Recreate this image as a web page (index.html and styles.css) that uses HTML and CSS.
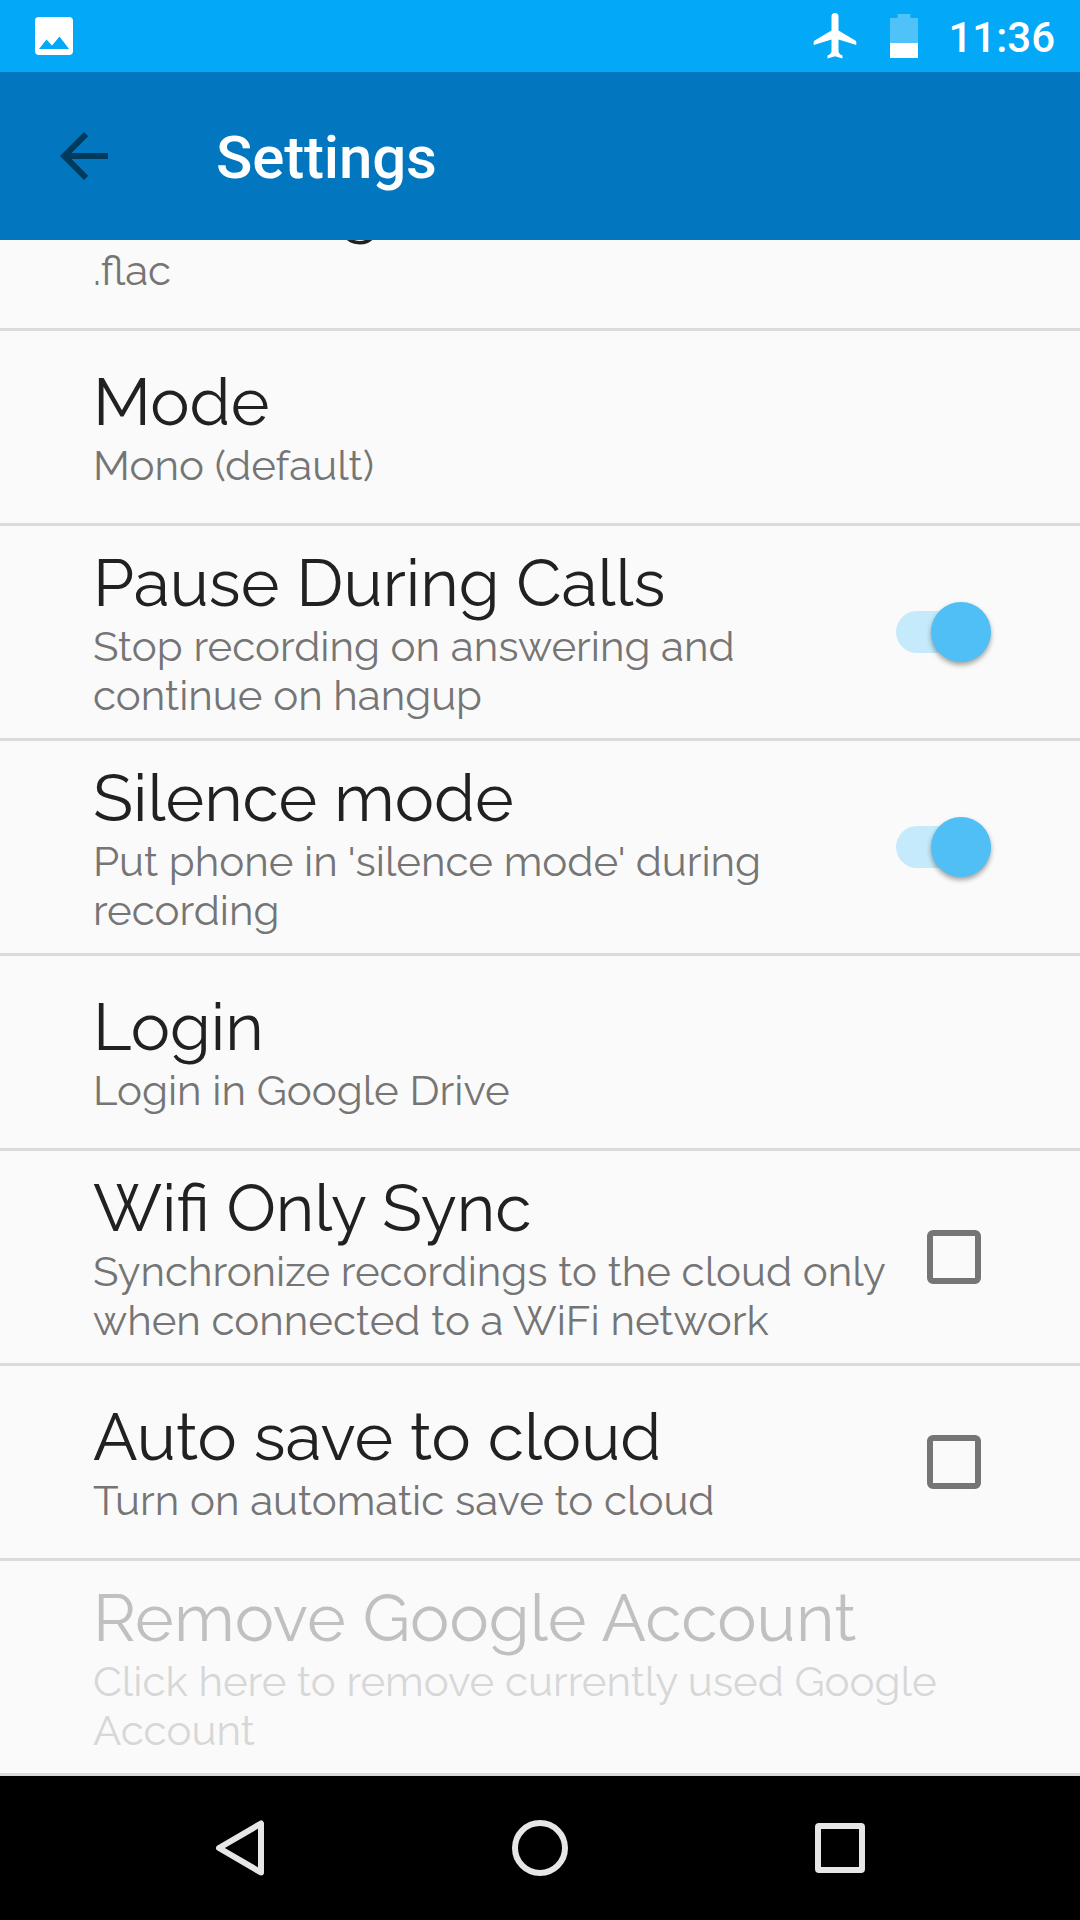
FILE: index.html
```html
<!DOCTYPE html>
<html lang="en">
<head>
  <meta charset="UTF-8">
  <meta name="viewport" content="width=device-width, initial-scale=1.0">
  <title>Settings</title>

  <link rel="stylesheet" href="styles.css">
</head>
<body>
  <div class="status-bar">
    <svg class="status-bar__picture" width="38" height="38" viewBox="0 0 38 38">
      <path fill="#fff" fill-rule="evenodd" d="M4 0h30a4 4 0 0 1 4 4v30a4 4 0 0 1-4 4H4a4 4 0 0 1-4-4V4a4 4 0 0 1 4-4zM4 32h30L24.500 19.500 17 28.500 11.500 22.500z"/>
    </svg>
    <svg class="status-bar__airplane" width="44" height="46" viewBox="0 0 44 46">
      <path fill="#fff" d="M18.500 3.500a3.500 3.500 0 0 1 7 0V17.500L42.300 27.500Q43.300 28.200 43.300 29.500V32L25.500 26.500V38Q25.700 41 29.500 42.500V45.500L22 43.200 14.500 45.500V42.500Q18.300 41 18.500 38V26.500L.7 32V29.500Q.7 28.200 1.700 27.500L18.500 17.500z"/>
    </svg>
    <svg class="status-bar__battery" width="28" height="44" viewBox="0 0 28 44">
      <path fill="#fff" fill-opacity=".3" d="M7.500 0h13v4H28v25H0V4h7.500z"/>
      <path fill="#fff" d="M0 29h28v15H0z"/>
    </svg>
    <span class="status-bar__time">11:36</span>
  </div>

  <header class="toolbar">
    <svg class="toolbar__back" width="72" height="72" viewBox="0 0 24 24">
      <path fill="#003a5c" d="M20 11H7.830l5.590-5.590L12 4l-8 8 8 8 1.410-1.410L7.830 13H20v-2z"/>
    </svg>
    <h1 class="toolbar__title">Settings</h1>
  </header>

  <main class="settings">
    <section class="setting">
      <div class="setting__text">
        <h2 class="setting__title">Encoding</h2>
        <p class="setting__summary">.flac</p>
      </div>
    </section>

    <section class="setting">
      <div class="setting__text">
        <h2 class="setting__title">Mode</h2>
        <p class="setting__summary">Mono (default)</p>
      </div>
    </section>

    <section class="setting setting--tall">
      <div class="setting__text">
        <h2 class="setting__title">Pause During Calls</h2>
        <p class="setting__summary">Stop recording on answering and<br>continue on hangup</p>
      </div>
      <div class="switch"><div class="switch__thumb"></div></div>
    </section>

    <section class="setting setting--tall">
      <div class="setting__text">
        <h2 class="setting__title">Silence mode</h2>
        <p class="setting__summary">Put phone in 'silence mode' during<br>recording</p>
      </div>
      <div class="switch"><div class="switch__thumb"></div></div>
    </section>

    <section class="setting">
      <div class="setting__text">
        <h2 class="setting__title">Login</h2>
        <p class="setting__summary">Login in Google Drive</p>
      </div>
    </section>

    <section class="setting setting--tall">
      <div class="setting__text">
        <h2 class="setting__title">Wifi Only Sync</h2>
        <p class="setting__summary">Synchronize recordings to the cloud only<br>when connected to a WiFi network</p>
      </div>
      <div class="checkbox"></div>
    </section>

    <section class="setting">
      <div class="setting__text">
        <h2 class="setting__title">Auto save to cloud</h2>
        <p class="setting__summary">Turn on automatic save to cloud</p>
      </div>
      <div class="checkbox"></div>
    </section>

    <section class="setting setting--tall setting--disabled">
      <div class="setting__text">
        <h2 class="setting__title">Remove Google Account</h2>
        <p class="setting__summary">Click here to remove currently used Google<br>Account</p>
      </div>
    </section>
  </main>

  <nav class="nav-bar">
    <svg width="60" height="60" viewBox="0 0 60 60">
      <path class="nav-bar__shape" d="M51 5.500V54.500L9 30z"/>
    </svg>
    <svg width="60" height="60" viewBox="0 0 60 60">
      <circle class="nav-bar__shape" cx="30" cy="30" r="25"/>
    </svg>
    <svg width="60" height="60" viewBox="0 0 60 60">
      <rect class="nav-bar__shape" x="8" y="8" width="44" height="44" rx="1"/>
    </svg>
  </nav>
</body>
</html>
```

FILE: styles.css
```css
* {
  box-sizing: border-box;
}

body {
  margin: 0;
  width: 1080px;
  height: 1920px;
  display: flex;
  flex-direction: column;
  overflow: hidden;
  background: #fafafa;
  font-family: Raleway, Lato, sans-serif;
}

h1, h2, p {
  margin: 0;
  font-weight: normal;
}

.status-bar {
  flex: none;
  height: 72px;
  padding: 0 25px 0 35px;
  display: flex;
  align-items: center;
  background: #03a9f7;
}

.status-bar__airplane {
  margin-left: auto;
}

.status-bar__battery {
  margin-left: 33px;
}

.status-bar__time {
  margin-left: 30px;
  padding-top: 2px;
  font: 500 42px/49px Roboto, sans-serif;
  color: #fff;
}

.toolbar {
  flex: none;
  height: 168px;
  padding-left: 48px;
  display: flex;
  align-items: center;
  background: #0277bf;
}

.toolbar__title {
  margin-left: 96px;
  padding-top: 4px;
  font: 500 60px/70px Roboto, sans-serif;
  letter-spacing: -0.15px;
  color: #fff;
}

/* The list is scrolled, so it is anchored to the bottom and cut off at the top */
.settings {
  flex: 1;
  min-height: 0;
  display: flex;
  flex-direction: column;
  justify-content: flex-end;
  overflow: hidden;
}

.setting {
  flex: none;
  height: 195px;
  padding: 0 89px 0 93px;
  display: flex;
  align-items: center;
  justify-content: space-between;
  border-bottom: 3px solid #dbdbdb;
}

.setting--tall {
  height: 215px;
}

.setting__text {
  white-space: nowrap;
}

.setting__title {
  padding-bottom: 2px;
  font-size: 66px;
  line-height: 75px;
  color: #212121;
}

.setting__summary {
  font-size: 42px;
  line-height: 49px;
  color: #757575;
}

.setting--disabled .setting__title {
  letter-spacing: 0.1px;
  color: #c0c0c0;
}

.setting--disabled .setting__summary {
  color: #d7d7d7;
}

.switch {
  width: 95px;
  height: 42px;
  display: flex;
  align-items: center;
  justify-content: flex-end;
  border-radius: 21px;
  background: #c5eafb;
}

.switch__thumb {
  width: 60px;
  height: 60px;
  border-radius: 50%;
  background: #4fbff5;
  box-shadow: 0 3px 5px rgba(0, 0, 0, 0.35);
}

.checkbox {
  width: 54px;
  height: 54px;
  margin-right: 10px;
  border: 6px solid #757575;
  border-radius: 6px;
}

.nav-bar {
  flex: none;
  height: 144px;
  display: flex;
  align-items: center;
  justify-content: center;
  gap: 240px;
  background: #000;
}

.nav-bar__shape {
  fill: none;
  stroke: #e6e6e6;
  stroke-width: 6;
  stroke-linejoin: round;
}
```
